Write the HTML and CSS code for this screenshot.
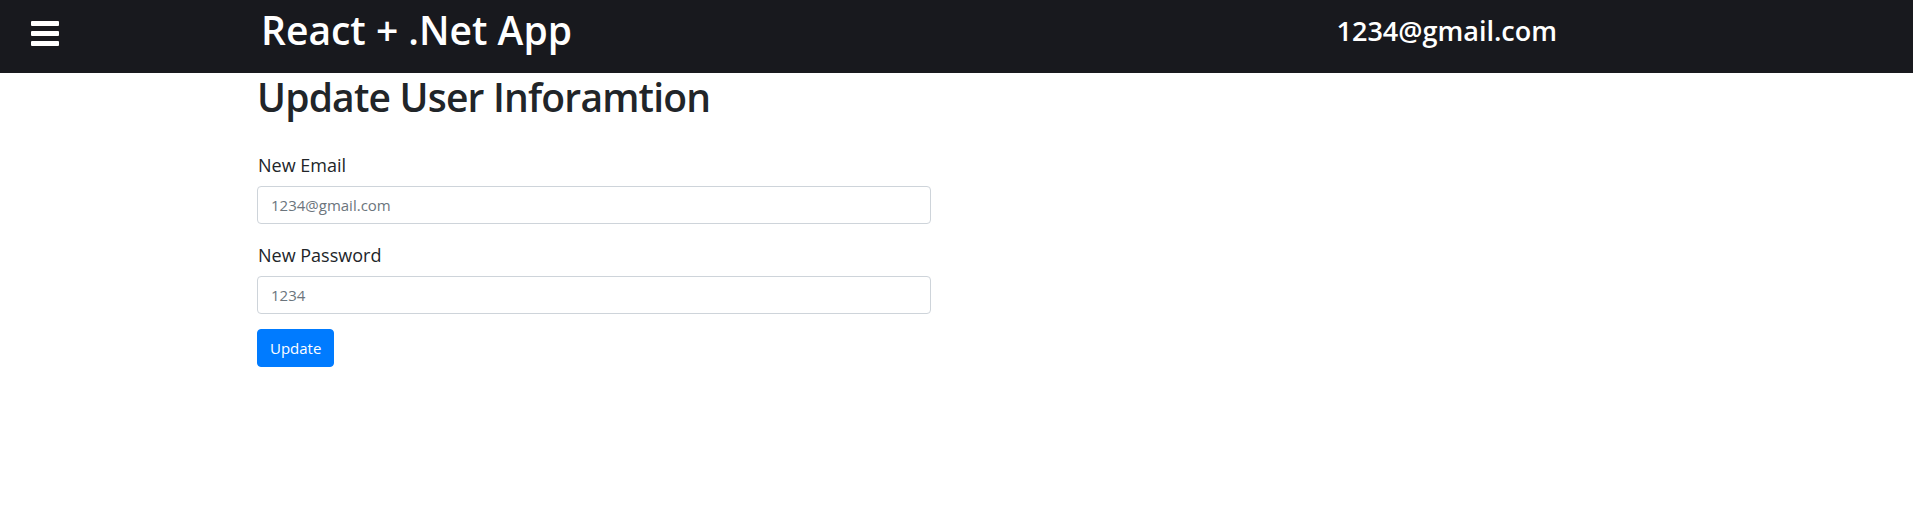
FILE: index.html
```html
<!DOCTYPE html>
<html lang="en">
<head>
<meta charset="utf-8">
<title>React + .Net App</title>
<link rel="stylesheet" href="styles.css">
</head>
<body>
<header class="topbar">
  <div class="menu-area">
    <button class="menu-btn" type="button" aria-label="Menu">
      <svg width="28" height="25" viewBox="0 0 28 25" aria-hidden="true">
        <rect x="0" y="0" width="28" height="5" rx="1" fill="#fff"/>
        <rect x="0" y="10" width="28" height="5" rx="1" fill="#fff"/>
        <rect x="0" y="20" width="28" height="5" rx="1" fill="#fff"/>
      </svg>
    </button>
  </div>
  <div class="brand">React + .Net App</div>
  <div class="user">1234@gmail.com</div>
</header>
<main class="content">
  <h1 class="title">Update User Inforamtion</h1>
  <form class="form">
    <div class="group">
      <label class="label" for="email">New Email</label>
      <input class="control" id="email" type="text" placeholder="1234@gmail.com">
    </div>
    <div class="group group-last">
      <label class="label" for="pw">New Password</label>
      <input class="control" id="pw" type="text" placeholder="1234">
    </div>
    <div class="actions">
      <button class="btn" type="button">Update</button>
    </div>
  </form>
</main>
</body>
</html>
```
FILE: styles.css
```css
html, body {
  margin: 0;
  padding: 0;
  background: #fff;
}
body {
  font-family: "Open Sans", "Noto Sans", sans-serif;
  color: #212529;
}
.topbar {
  height: 73px;
  background: #18191e;
  display: flex;
  align-items: flex-start;
}
.menu-area {
  width: 261px;
  padding-left: 31px;
  box-sizing: border-box;
  flex: none;
}
.menu-btn {
  margin-top: 21px;
  padding: 0;
  border: 0;
  background: transparent;
  display: block;
  cursor: pointer;
}
.menu-btn svg {
  display: block;
}
.brand {
  flex: 1;
  margin-top: 8px;
  color: #fff;
  font-size: 39px;
  font-weight: 600;
  line-height: 44px;
  white-space: nowrap;
}
.user {
  margin-top: 13px;
  margin-right: 356px;
  color: #fff;
  font-size: 27px;
  font-weight: 600;
  line-height: 36px;
  white-space: nowrap;
}
.content {
  padding-left: 257px;
}
.title {
  margin: 0 0 32px 0;
  font-size: 39px;
  font-weight: 600;
  letter-spacing: -0.8px;
  line-height: 48px;
  color: #212529;
}
.form {
  width: 674px;
  display: flex;
  flex-direction: column;
}
.group {
  display: flex;
  flex-direction: column;
  margin-bottom: 19px;
}
.group-last {
  margin-bottom: 15px;
}
.label {
  font-size: 18px;
  line-height: 24px;
  margin: 0 0 9px 1px;
  color: #212529;
}
.control {
  height: 38px;
  box-sizing: border-box;
  border: 1px solid #ced4da;
  border-radius: 4px;
  padding: 0 13px;
  font-family: inherit;
  font-size: 15px;
  color: #495057;
  background: #fff;
  outline: none;
}
.control::placeholder {
  color: #6c757d;
  opacity: 1;
}
.actions {
  display: flex;
}
.btn {
  height: 38px;
  padding: 0 12px;
  border: 1px solid #007bff;
  border-radius: 4px;
  background: #007bff;
  color: #fff;
  font-family: inherit;
  font-size: 15px;
  line-height: 36px;
  cursor: pointer;
}
```
